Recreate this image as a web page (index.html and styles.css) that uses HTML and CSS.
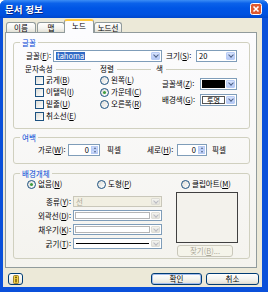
FILE: index.html
```html
<!DOCTYPE html>
<html lang="ko">
<head>
<meta charset="utf-8">
<title>문서 정보</title>
<link rel="stylesheet" href="styles.css">
</head>
<body>
<div class="window">
  <div class="titlebar">
    <span class="title">문서 정보</span>
    <span class="close"><svg width="12" height="12" viewBox="0 0 12 12"><rect x="0.5" y="0.5" width="11" height="11" rx="2" fill="#E0592E" stroke="#FFFFFF"/><path d="M3.5 3.5 L8.5 8.5 M8.5 3.5 L3.5 8.5" stroke="#FFFFFF" stroke-width="1.6"/></svg></span>
  </div>
  <div class="client">
    <div class="tabs">
      <div class="tab w1">이름</div>
      <div class="tab w2">맵</div>
      <div class="tab sel">노드</div>
      <div class="tab w4">노드선</div>
    </div>
    <div class="panel">
      <fieldset class="grp g-font">
        <legend>글꼴</legend>
        <div class="row r-font">
          <span class="lbl l-font">글꼴(<u>F</u>):</span>
          <span class="combo c-font"><span class="val"><span class="hl">tahoma</span></span><span class="arr"></span></span>
          <span class="lbl l-size">크기(<u>S</u>):</span>
          <span class="combo c-size"><span class="val">20</span><span class="arr"></span></span>
        </div>
        <div class="cols">
          <div class="col c-attr">
            <div class="sec"><span>문자속성</span><i class="rule"></i></div>
            <div class="opt"><span class="cb"></span>굵게(<u>B</u>)</div>
            <div class="opt"><span class="cb"></span>이탤릭(<u>I</u>)</div>
            <div class="opt"><span class="cb"></span>밑줄(<u>U</u>)</div>
            <div class="opt"><span class="cb"></span>취소선(<u>E</u>)</div>
          </div>
          <div class="col c-align">
            <div class="sec"><span>정렬</span><i class="rule"></i></div>
            <div class="opt"><span class="rb"></span>왼쪽(<u>L</u>)</div>
            <div class="opt"><span class="rb on"></span>가운데(<u>C</u>)</div>
            <div class="opt"><span class="rb"></span>오른쪽(<u>R</u>)</div>
          </div>
          <div class="col c-color">
            <div class="sec"><span>색</span><i class="rule"></i></div>
            <div class="crow"><span class="lbl l-col">글꼴색(<u>Z</u>):</span><span class="combo c-col"><span class="sw black"></span><span class="arr"></span></span></div>
            <div class="crow"><span class="lbl l-col">배경색(<u>G</u>):</span><span class="combo c-col"><span class="sw trans">투명</span><span class="arr"></span></span></div>
          </div>
        </div>
      </fieldset>

      <fieldset class="grp g-margin">
        <legend>여백</legend>
        <div class="row r-margin">
          <span class="lbl l-w">가로(<u>W</u>):</span>
          <span class="spin s-w"><span class="num">0</span><span class="sbtn"><i class="up"></i><i class="dn"></i></span></span>
          <span class="unit u-w">픽셀</span>
          <span class="lbl l-h">세로(<u>H</u>):</span>
          <span class="spin s-h"><span class="num">0</span><span class="sbtn"><i class="up"></i><i class="dn"></i></span></span>
          <span class="unit u-h">픽셀</span>
        </div>
      </fieldset>

      <fieldset class="grp g-bg">
        <legend>배경개체</legend>
        <div class="row r-kind">
          <span class="opt2 k1"><span class="rb on"></span>없음(<u>N</u>)</span>
          <span class="opt2 k2"><span class="rb"></span>도형(<u>P</u>)</span>
          <span class="opt2 k3"><span class="rb"></span>클립아트(<u>M</u>)</span>
        </div>
        <div class="bgbody">
          <div class="fields">
            <div class="frow"><span class="flbl">종류(<u>Y</u>):</span><span class="combo fc dis"><span class="val">선</span><span class="arr pale"></span></span></div>
            <div class="frow"><span class="flbl">외곽선(<u>D</u>):</span><span class="combo fc"><span class="sw2"></span><span class="arr pale"></span></span></div>
            <div class="frow"><span class="flbl">채우기(<u>K</u>):</span><span class="combo fc"><span class="sw2"></span><span class="arr pale"></span></span></div>
            <div class="frow"><span class="flbl">굵기(<u>T</u>):</span><span class="combo fc"><span class="lw"><i></i></span><span class="arr pale"></span></span></div>
          </div>
          <div class="pcol">
            <div class="preview"></div>
            <button class="btn find" disabled>찾기(<u>B</u>)...</button>
          </div>
        </div>
      </fieldset>
    </div>
    <div class="bottom">
      <button class="btn help"><svg width="8" height="9" viewBox="0 0 8 9"><rect x="1.5" y="0.5" width="5" height="8" rx="1" fill="#F5D54A" stroke="#8C6A10" stroke-width="0.8"/><circle cx="4" cy="2.3" r="0.9" fill="#5A4200"/><rect x="3.4" y="3.8" width="1.2" height="3.6" fill="#5A4200"/></svg></button>
      <button class="btn ok">확인</button>
      <button class="btn cancel">취소</button>
    </div>
  </div>
</div>
</body>
</html>
```

FILE: styles.css
```css
* { box-sizing: border-box; }
html, body { margin: 0; padding: 0; }
body {
  width: 268px; height: 292px; overflow: hidden; background: #FFFFFF;
  font-family: "Noto Sans CJK KR", "Noto Sans", sans-serif;
  font-size: 7.5px; line-height: 10px; color: #000000;
}
u { text-decoration: underline; text-underline-offset: 1px; }

.window {
  width: 268px; height: 292px; background: #0A50DA;
  border-radius: 6px 6px 0 0; display: flex; flex-direction: column; overflow: hidden;
}
.titlebar {
  height: 18px; flex: none; display: flex; justify-content: space-between; align-items: flex-start;
  padding: 0 6px 0 5px;
  background: linear-gradient(#3C8DF5 0, #0B62EA 18%, #0055E5 45%, #0052E0 80%, #0047CC 100%);
}
.title { color: #FFFFFF; font-weight: bold; font-size: 9.5px; line-height: 18px; text-shadow: 1px 1px 0 #0A2A8A; }
.close { margin-top: 3px; width: 12px; height: 12px; display: block; }
.close svg { display: block; }

.client {
  flex: 1; margin: 0 6px 5px 3px; background: #ECE9D8;
  display: flex; flex-direction: column; padding: 1px 3px 2px 2px;
}

.tabs { height: 13px; flex: none; display: flex; align-items: flex-end; padding-left: 1px; }
.tab {
  height: 10px; border: 1px solid #919B9C; border-bottom: 0; border-radius: 3px 3px 0 0;
  background: linear-gradient(#FFFFFF, #F3F3EF 60%, #E3E1D6);
  text-align: center; line-height: 9px;
}
.w1 { width: 30px; }
.w2 { width: 28px; margin-left: 1px; }
.sel {
  width: 30px; height: 14px; margin-left: -1px; margin-bottom: -1px;
  background: #FCFCFE; border-top: 2px solid #FFC83C;
  position: relative; z-index: 1; line-height: 10px;
}
.w4 { width: 28px; }

.panel {
  height: 236px; flex: none; margin-right: 2px;
  border: 1px solid #919B9C;
  background: linear-gradient(#FCFCFE, #F4F3EE);
  padding: 4px 6px 0 7px;
}

.grp { margin: 0; padding: 0; border: 1px solid #D0D0BF; border-radius: 3px; min-width: 0; }
.grp legend { margin-left: 6px; padding: 0 2px; line-height: 11px; height: 11px; color: #0046D5; }
.g-font { padding-bottom: 6px; }
.g-margin { margin-top: 3px; padding-bottom: 7px; }
.g-bg { margin-top: 4px; padding-bottom: 1px; }

.row { display: flex; align-items: center; white-space: nowrap; }
.r-font { margin-top: 2px; height: 12px; padding-left: 12px; }
.l-font { width: 27px; }
.c-font { width: 109px; }
.l-size { width: 30px; margin-left: 4px; }
.c-size { width: 41px; }

.combo { display: flex; height: 12px; border: 1px solid #7F9DB9; background: #FFFFFF; padding: 1px; }
.combo .val { flex: 1; display: flex; align-items: center; padding-left: 1px; white-space: nowrap; line-height: 8px; }
.hl { background: #316AC5; color: #FFFFFF; padding: 0 1px; display: block; height: 8px; line-height: 8px; }
.arr {
  width: 9px; flex: none; background: linear-gradient(#D6E2FD, #B4C8F6);
  border: 1px solid #B9CCF5; border-radius: 1px;
  display: flex; align-items: center; justify-content: center;
}
.arr::after {
  content: ""; width: 3px; height: 3px;
  border-right: 1.5px solid #4D6185; border-bottom: 1.5px solid #4D6185;
  transform: translateY(-1px) rotate(45deg);
}
.arr.pale { background: linear-gradient(#F4F4F0, #E4E3DC); border-color: #DEDDD6; }
.arr.pale::after { border-color: #B9BAC2; }

.cols { display: flex; margin-top: 2px; padding-left: 11px; }
.col { display: flex; flex-direction: column; }
.c-attr { width: 75px; }
.c-align { width: 56px; }
.c-color { width: 81px; }
.sec { display: flex; align-items: center; height: 10px; white-space: nowrap; }
.rule { flex: 1; height: 1px; background: #D0D0BF; margin-left: 3px; }
.c-attr .rule { margin-right: 9px; }
.c-align .rule { margin-right: 5px; }
.opt { display: flex; align-items: center; height: 12px; white-space: nowrap; }
.c-attr .opt { padding-left: 10px; }
.cb {
  width: 9px; height: 9px; flex: none; margin-right: 2px;
  border: 1px solid #1C5180; background: linear-gradient(135deg, #DCDCD7, #FFFFFF);
}
.rb {
  width: 9px; height: 9px; flex: none; margin-right: 2px;
  border: 1px solid #1C5180; border-radius: 50%;
  background: linear-gradient(135deg, #DCDCD7, #FFFFFF);
  display: flex; align-items: center; justify-content: center;
}
.rb.on::after { content: ""; width: 3px; height: 3px; border-radius: 50%; background: #3E9C3E; }

.crow { display: flex; align-items: center; height: 12px; margin-top: 4px; padding-left: 6px; white-space: nowrap; }
.l-col { width: 38px; }
.c-col { width: 37px; }
.sw { flex: 1; margin-right: 1px; }
.sw.black { background: #000000; }
.sw.trans { border: 1px solid #555555; background: #FFFFFF; display: flex; align-items: center; justify-content: center; line-height: 6px; font-size: 7px; }

.r-margin { margin-top: 1px; height: 12px; padding-left: 24px; }
.l-w { width: 30px; }
.spin { display: flex; height: 12px; border: 1px solid #7F9DB9; background: #FFFFFF; padding: 1px; }
.s-w { width: 32px; }
.s-h { width: 30px; }
.num { flex: 1; display: flex; align-items: center; justify-content: flex-end; padding-right: 2px; }
.sbtn { width: 7px; display: flex; flex-direction: column; }
.sbtn i {
  flex: 1; background: linear-gradient(#D6E2FD, #B4C8F6); border: 1px solid #B9CCF5;
  display: flex; align-items: center; justify-content: center;
}
.sbtn i::after { content: ""; border-left: 1.5px solid transparent; border-right: 1.5px solid transparent; }
.sbtn .up::after { border-bottom: 2px solid #4D6185; }
.sbtn .dn::after { border-top: 2px solid #4D6185; }
.u-w { width: 40px; margin-left: 7px; }
.l-h { width: 30px; }
.u-h { margin-left: 5px; }

.r-kind { height: 10px; padding-left: 13px; }
.opt2 { display: flex; align-items: center; height: 10px; }
.k1 { width: 70px; }
.k2 { width: 84px; }
.bgbody { display: flex; margin-top: 3px; }
.fields { width: 162px; padding-top: 4px; }
.frow { display: flex; align-items: center; height: 11px; margin-bottom: 3px; white-space: nowrap; }
.flbl { width: 57px; text-align: right; }
.fc { width: 89px; height: 11px; margin-left: 2px; }
.fc .val { line-height: 7px; }
.fc.dis { background: #F1EFE2; border-color: #C9C7BA; color: #ACA899; }
.sw2 { flex: 1; border: 1px solid #B5B5B5; margin-right: 1px; background: #FFFFFF; }
.lw { flex: 1; display: flex; align-items: center; margin-right: 1px; padding: 0 1px; }
.lw i { flex: 1; height: 1px; background: #000000; }
.preview { width: 62px; height: 51px; border: 1px solid #404040; background: #F3F2EC; }

.btn {
  font: inherit; padding: 0; margin: 0; color: #000000;
  border: 1px solid #003C74; border-radius: 3px;
  background: linear-gradient(#FFFFFF 0, #F4F4F0 50%, #E6E4DA 90%, #D6D0C5 100%);
  line-height: 10px; text-align: center;
}
.btn:disabled { border-color: #C9C7BA; color: #ACA899; background: #F5F4EA; }
.find { display: block; width: 56px; height: 12px; margin: 2px 0 0 1px; }

.bottom { display: flex; margin-top: 5px; height: 12px; flex: none; }
.help { width: 15px; height: 12px; margin-left: 3px; display: flex; align-items: center; justify-content: center; }
.help svg { display: block; }
.ok { width: 51px; height: 12px; margin-left: auto; box-shadow: inset 0 0 0 1px #A4BDEC; }
.cancel { width: 53px; height: 12px; margin-left: 4px; }
```
